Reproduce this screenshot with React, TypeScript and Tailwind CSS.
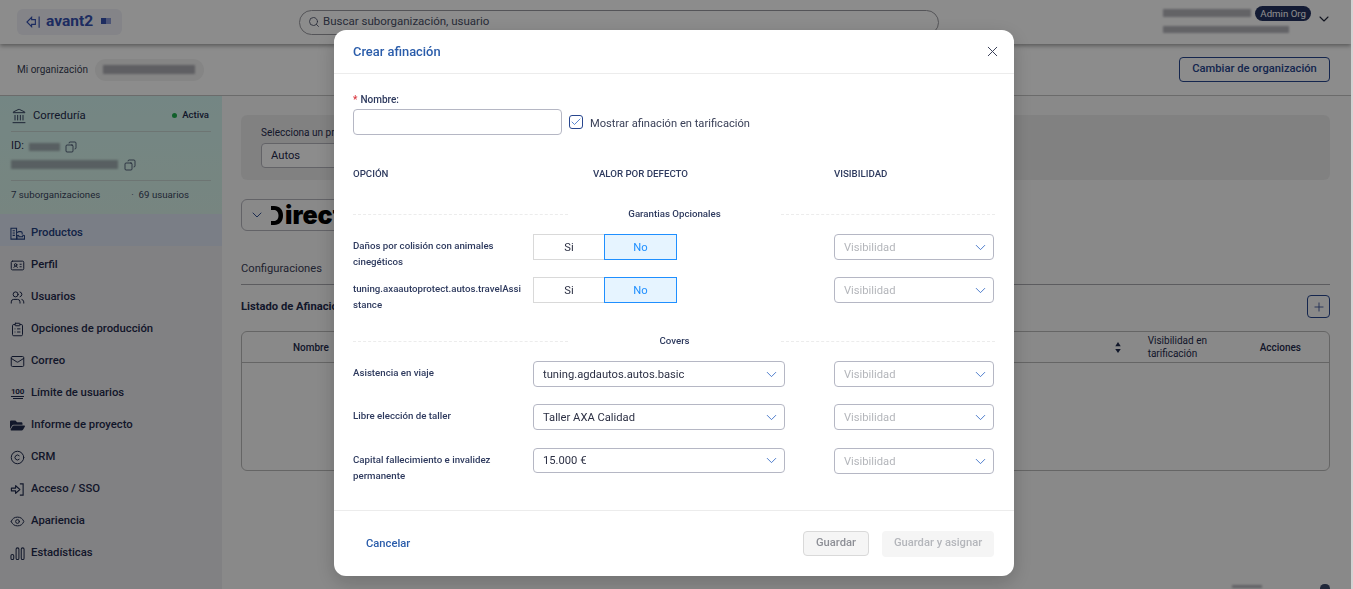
import type { ReactNode } from "react";
import {
  Landmark,
  Copy,
  IdCard,
  Users,
  ClipboardList,
  Mail,
  Copyright,
  Eye,
  Search,
  ChevronDown,
  Plus,
  X,
  Check,
} from "lucide-react";
import { FaFolderOpen } from "react-icons/fa";

const font = "font-['Roboto','Liberation_Sans',sans-serif]";

// Blurred-out personal data in the screenshot.
function Smudge({ className }: { className: string }) {
  return <span className={`block bg-[#6b6b78] opacity-50 blur-[1.2px] ${className}`} />;
}

function ProductsIcon() {
  return (
    <svg viewBox="0 0 16 16" className="h-[15px] w-[15px]" fill="none" stroke="currentColor" strokeWidth="1.1">
      <path d="M1 14V2.5h6V14z" />
      <path d="M2.8 5h2.4M2.8 7.5h2.4M2.8 10h2.4" />
      <path d="M8 7.5c0-1 .7-1.5 1.5-1.5h2c.8 0 1.5.5 1.5 1.5V9" />
      <path d="M7.5 14v-3.5c.5-1 1.6-1 2 0v1h4v-1c.4-1 1.5-1 2 0V14z" />
    </svg>
  );
}

function HundredIcon() {
  return (
    <span className="flex h-[15px] w-[15px] flex-col items-center justify-center text-[8px] leading-[8px] font-bold">
      <span className="border-b border-current tracking-[-0.2px]">100</span>
      <span className="mt-px h-px w-2.5 bg-current" />
    </span>
  );
}

function LoginIcon() {
  return (
    <svg viewBox="0 0 16 16" className="h-[15px] w-[15px]" fill="none" stroke="currentColor" strokeWidth="1.2">
      <path d="M10.5 2H14v12h-3.5" />
      <path d="M1.5 6.5h4.5V3.8L10.5 8 6 12.2V9.5H1.5z" strokeLinejoin="round" />
    </svg>
  );
}

function BarsIcon() {
  return (
    <svg viewBox="0 0 16 16" className="h-[15px] w-[15px]" fill="none" stroke="currentColor" strokeWidth="1.1">
      <rect x="1" y="9" width="3" height="5.5" rx="1.5" />
      <rect x="6.5" y="2" width="3" height="12.5" rx="1.5" />
      <rect x="12" y="2" width="3" height="12.5" rx="1.5" />
    </svg>
  );
}

const navIcon = "h-[15px] w-[15px]";

const navItems = [
  { label: "Productos", icon: <ProductsIcon />, active: true },
  { label: "Perfil", icon: <IdCard className={navIcon} strokeWidth={1.6} /> },
  { label: "Usuarios", icon: <Users className={navIcon} strokeWidth={1.6} /> },
  { label: "Opciones de producción", icon: <ClipboardList className={navIcon} strokeWidth={1.6} /> },
  { label: "Correo", icon: <Mail className={navIcon} strokeWidth={1.6} /> },
  { label: "Límite de usuarios", icon: <HundredIcon /> },
  { label: "Informe de proyecto", icon: <FaFolderOpen className={navIcon} /> },
  { label: "CRM", icon: <Copyright className={navIcon} strokeWidth={1.6} /> },
  { label: "Acceso / SSO", icon: <LoginIcon /> },
  { label: "Apariencia", icon: <Eye className={navIcon} strokeWidth={1.6} /> },
  { label: "Estadísticas", icon: <BarsIcon /> },
];

function Sidebar() {
  return (
    <aside className="w-[222px] shrink-0 bg-[#ececee]">
      <div className="h-[118px] bg-gradient-to-b from-[#d4f5f0] to-[#d9f3ea] pt-[9px] pr-[13px] pl-[11px] text-[#1f2a4d]">
        <div className="flex h-[21px] items-center justify-between">
          <div className="flex items-center gap-[6px] text-[11.3px]">
            <Landmark className="h-4 w-4" strokeWidth={1.3} />
            <span className="pt-[1px]">Correduría</span>
          </div>
          <div className="flex items-center gap-[5px] text-[9.6px] font-medium">
            <span className="h-[5px] w-[5px] rounded-full bg-[#1fae4e]" />
            Activa
          </div>
        </div>
        <div className="mt-[5px] -mr-[2px] border-t border-[#c7d6d2] pt-[6px]">
          <div className="flex h-[17px] items-center gap-[5px] text-[11px]">
            ID:
            <Smudge className="h-[8px] w-[31px]" />
            <Copy className="h-3 w-3 -scale-x-100" strokeWidth={1.4} />
          </div>
          <div className="mt-[1px] flex h-[17px] items-center gap-[6px]">
            <Smudge className="h-[9px] w-[107px]" />
            <Copy className="h-3 w-3 -scale-x-100" strokeWidth={1.4} />
          </div>
        </div>
        <div className="mt-[7px] -mr-[2px] flex h-[29px] items-center gap-[31px] border-t border-[#c7d6d2] text-[9.7px] text-[#3a4560]">
          <span>7 suborganizaciones</span>
          <span>· &nbsp;69 usuarios</span>
        </div>
      </div>
      <nav>
        {navItems.map((item) => (
          <div
            key={item.label}
            className={`flex h-8 items-center gap-[6px] px-[10px] pt-[6px] text-[11.3px] font-medium ${
              item.active ? "bg-[#dfe5f5] text-[#23407f]" : "text-[#1f2a4d]"
            }`}
          >
            <span className="flex w-[15px] justify-center">{item.icon}</span>
            {item.label}
          </div>
        ))}
      </nav>
    </aside>
  );
}

function Background() {
  return (
    <div className={`flex h-[589px] w-[1351px] flex-col overflow-hidden bg-[#fafafa] ${font}`}>
      <header className="relative z-10 flex h-[44px] shrink-0 items-center bg-white pr-[19px] pl-[17px] shadow-[0_2px_4px_rgba(0,0,0,0.35)]">
        <div className="flex h-[26px] w-[105px] shrink-0 items-center gap-[5px] rounded-md bg-[#f0f1f8] pl-[9px] text-[#3550b0]">
          <svg viewBox="0 0 16 12" className="h-3 w-[15px] shrink-0" fill="none" stroke="currentColor" strokeWidth="1.2">
            <path d="M10 3.5H6V1L1 6l5 5V8.5h4zM14 0v12" />
          </svg>
          <span className="text-[15.5px] leading-none font-bold">avant2</span>
          <span className="mb-[3px] ml-[3px] flex">
            <span className="h-[6px] w-[5px] bg-[#3550b0]" />
            <span className="h-[6px] w-[5px] bg-[#8c9bd8]" />
          </span>
        </div>
        <div className="ml-[177px] flex h-[25px] w-[640px] items-center gap-[3px] rounded-full border border-[#9a9aa0] pl-[8px] text-[11.5px] text-[#4a5068]">
          <Search className="h-3 w-3" strokeWidth={1.7} />
          Buscar suborganización, usuario
        </div>
        <div className="-mt-[6px] ml-auto flex items-center gap-[5px]">
          <div className="flex flex-col gap-[5px]">
            <div className="flex items-center gap-[4px]">
              <Smudge className="h-[8px] w-[88px]" />
              <span className="rounded-full bg-[#24325f] px-[5px] text-[9.7px] leading-[15px] text-white">Admin Org</span>
            </div>
            <Smudge className="h-[7px] w-[126px]" />
          </div>
          <ChevronDown className="h-4 w-4 text-[#20263a]" strokeWidth={1.6} />
        </div>
      </header>

      <div className="flex h-[52px] shrink-0 items-center justify-between border-b border-[#c4c4c4] bg-white pr-[21px] pl-[17px]">
        <div className="flex items-center gap-[7px] text-[10px] text-[#3a3f55]">
          Mi organización
          <span className="flex h-[22px] w-[109px] items-center justify-center rounded-full bg-[#f2f2f2]">
            <Smudge className="h-[9px] w-[92px]" />
          </span>
        </div>
        <button className="h-[25px] w-[151px] rounded border border-[#27468e] text-[11.2px] font-medium text-[#27468e]">
          Cambiar de organización
        </button>
      </div>

      <div className="flex min-h-0 flex-1">
        <Sidebar />
        <main className="min-w-0 flex-1 pt-[19px] pr-[21px] pl-[19px] text-[#1f2a4d]">
          <div className="h-[65px] rounded-md bg-[#ececec] pt-[12px] pl-[20px]">
            <div className="text-[10px] leading-[11px]">Selecciona un producto</div>
            <div className="mt-[5px] flex h-[25px] w-[220px] items-center rounded border border-[#b4b4bc] bg-white pt-[1px] pl-[9px] text-[11.2px]">
              Autos
            </div>
          </div>
          <div className="mt-[19px] flex h-[32px] w-[300px] items-center rounded-md border border-[#b4b4bc] pl-[7px]">
            <ChevronDown className="h-4 w-4 text-[#27468e]" strokeWidth={1.4} />
            {/* brand wordmark: the D has no stem */}
            <svg viewBox="0 0 12 19" className="ml-[6px] h-[19px] w-3 shrink-0 fill-black">
              <path d="M0 0h3c6 0 9 4 9 9.5S9 19 3 19H0v-4h3c3 0 4.5-2.5 4.5-5.5S6 4 3 4H0z" />
            </svg>
            <span className="ml-[2px] font-['Inter',sans-serif] text-[25px] leading-none font-black text-black">irect</span>
          </div>
          <div className="mt-[27px] h-[27px] border-b border-[#a8a8ae] pt-[3px] text-[11.2px] text-[#3a4058]">Configuraciones</div>
          <div className="mt-[10px] flex h-[23px] items-center justify-between">
            <span className="pt-[1px] text-[11.2px] font-bold">Listado de Afinaciones</span>
            <span className="flex h-[23px] w-[23px] items-center justify-center rounded border border-[#27468e] text-[#27468e]">
              <Plus className="h-[14px] w-[14px]" strokeWidth={1.4} />
            </span>
          </div>
          <div className="mt-[13px] h-[140px] rounded-md border border-[#b8b8b8]">
            <div className="flex h-[31px] items-center border-b border-[#b8b8b8] text-[10px] font-medium">
              <span className="ml-[51px]">Nombre</span>
              <svg viewBox="0 0 8 12" className="ml-auto h-[11px] w-2 fill-current">
                <path d="M4 0l3 4.5H1zM4 12L1 7.5h6z" />
              </svg>
              <span className="mr-[42px] ml-[26px] w-[70px] leading-[13px] font-normal">Visibilidad en tarificación</span>
              <span className="mr-[28px]">Acciones</span>
            </div>
          </div>
          <div className="mt-[113px] flex items-start justify-end gap-[58px]">
            <Smudge className="mt-[1px] h-[3px] w-[30px]" />
            <span className="h-[9px] w-[10px] rounded-full bg-[#3b4a6b]" />
          </div>
        </main>
      </div>
    </div>
  );
}

function Selector({ value, placeholder, className = "h-[26px]" }: { value?: string; placeholder?: boolean; className?: string }) {
  return (
    <div
      className={`flex items-center justify-between rounded border border-[#b5b7c4] pr-[4px] pl-[9px] text-[11.2px] ${className} ${
        placeholder ? "w-[160px] text-[#b4b6bb]" : "w-[252px] text-[#2c3044]"
      }`}
    >
      <span className="pt-[2px]">{value}</span>
      <ChevronDown className="h-[17px] w-[17px] text-[#3168c4]" strokeWidth={1.2} />
    </div>
  );
}

function Toggle() {
  return (
    <div className="flex h-[26px] w-[144px] text-[11.2px]">
      <span className="flex w-[71px] items-center justify-center border border-r-0 border-[#d9d9d9] pt-[2px] text-[#2c3044]">Si</span>
      <span className="flex w-[73px] items-center justify-center border border-[#1f8fff] bg-[#e6f4ff] pt-[2px] text-[#1f8fff]">No</span>
    </div>
  );
}

function SectionTitle({ title }: { title: string }) {
  return (
    <div className="flex h-[12px] items-center justify-between">
      <span className="w-[215px] border-t border-dashed border-[#ececec]" />
      <span className="text-[9.7px] font-medium text-[#2e3a5e]">{title}</span>
      <span className="w-[214px] border-t border-dashed border-[#ececec]" />
    </div>
  );
}

function Row({ label, children, className }: { label: string; children: ReactNode; className: string }) {
  return (
    <div className={`flex h-[26px] items-start ${className}`}>
      <div className="w-[180px] pt-[4px] pr-[12px] text-[9.7px] leading-[16px] font-medium break-words text-[#2e3a5e]">{label}</div>
      <div className="w-[301px]">{children}</div>
      <Selector value="Visibilidad" placeholder />
    </div>
  );
}

function TuningModal() {
  return (
    <div className={`fixed inset-y-0 left-0 z-20 w-[1351px] bg-black/45 ${font}`}>
      <div className="absolute top-[30px] left-[334px] flex h-[546px] w-[680px] flex-col rounded-xl bg-white shadow-[0_6px_20px_rgba(0,0,0,0.2)]">
        <div className="flex h-[44px] shrink-0 items-center justify-between border-b border-[#ececec] pr-[13px] pl-[19px]">
          <h2 className="text-[12.9px] font-medium text-[#2a5caa]">Crear afinación</h2>
          <X className="h-[17px] w-[17px] text-[#3a4058]" strokeWidth={1.4} />
        </div>

        <div className="flex-1 px-[19px] pt-[20px]">
          <div className="text-[10px] leading-[12px] font-medium text-[#2e3a5e]">
            <span className="mr-[3px] text-[#d9363e]">*</span>Nombre:
          </div>
          <div className="mt-[3px] flex items-center">
            <div className="h-[26px] w-[209px] rounded border border-[#b5b7c4]" />
            <span className="ml-[7px] flex h-[14px] w-[14px] items-center justify-center rounded-[3px] border border-[#27468e] text-[#3168c4]">
              <Check className="h-3 w-3" strokeWidth={1.6} />
            </span>
            <span className="ml-[7px] pt-[4px] text-[11.15px] text-[#3a4058]">Mostrar afinación en tarificación</span>
          </div>

          <div className="mt-[33px] flex text-[9.7px] leading-[12px] font-medium text-[#2e3a5e]">
            <span className="w-[240px]">OPCIÓN</span>
            <span className="w-[241px]">VALOR POR DEFECTO</span>
            <span>VISIBILIDAD</span>
          </div>

          <div className="mt-[28px]">
            <SectionTitle title="Garantias Opcionales" />
          </div>
          <Row label="Daños por colisión con animales cinegéticos" className="mt-[14px]">
            <Toggle />
          </Row>
          <Row label="tuning.axaautoprotect.autos.travelAssistance" className="mt-[17px]">
            <Toggle />
          </Row>

          <div className="mt-[32px]">
            <SectionTitle title="Covers" />
          </div>
          <Row label="Asistencia en viaje" className="mt-[14px]">
            <Selector value="tuning.agdautos.autos.basic" />
          </Row>
          <Row label="Libre elección de taller" className="mt-[17px]">
            <Selector value="Taller AXA Calidad" />
          </Row>
          <Row label="Capital fallecimiento e invalidez permanente" className="mt-[18px]">
            <Selector value="15.000 €" className="h-[25px]" />
          </Row>
        </div>

        <div className="flex h-[66px] shrink-0 items-center justify-between border-t border-[#ececec] pr-[20px] pl-[32px]">
          <span className="pt-[2px] text-[11.2px] font-medium text-[#2a5caa]">Cancelar</span>
          <div className="flex gap-[13px] text-[11.2px] font-medium">
            <button className="h-[25px] w-[66px] rounded border border-[#d9d9d9] bg-[#f5f5f5] text-[#8d8f96]">Guardar</button>
            <button className="h-[26px] w-[112px] rounded bg-[#f5f5f5] text-[#b4b6bb]">Guardar y asignar</button>
          </div>
        </div>
      </div>
    </div>
  );
}

export default function App() {
  return (
    <div className="h-[589px] overflow-hidden bg-[#d4d4d4]">
      <Background />
      <TuningModal />
    </div>
  );
}
